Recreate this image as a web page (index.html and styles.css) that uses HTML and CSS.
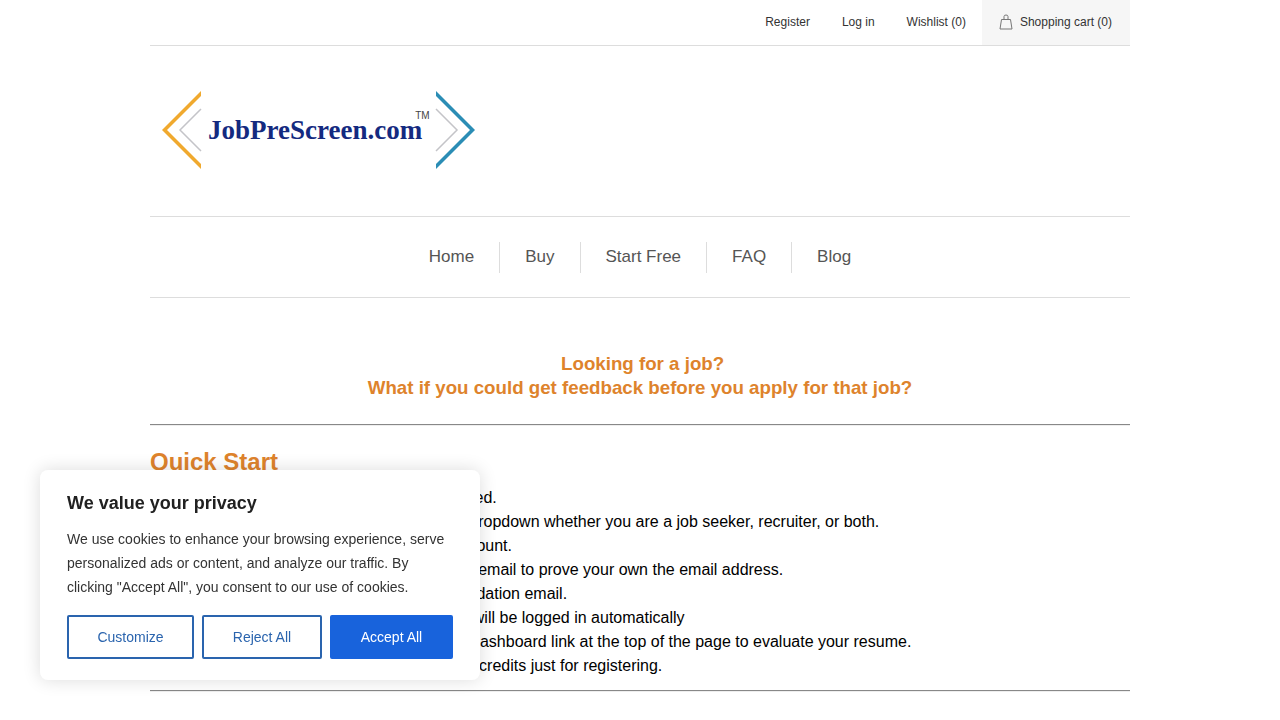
FILE: index.html
```html
<!DOCTYPE html>
<html lang="en">
<head>
    <meta charset="UTF-8">
    <meta name="viewport" content="width=device-width, initial-scale=1.0">
    <title>JobPreScreen.com</title>
    <link rel="stylesheet" href="styles.css">
</head>
<body>

    <div class="master">
        <div class="header-links">
            <a href="#">Register</a>
            <a href="#">Log in</a>
            <a href="#">Wishlist (0)</a>
            <a href="#" class="cart-link">
                <svg class="cart-icon" width="16" height="16" viewBox="0 0 16 16" fill="none" stroke="#777" stroke-width="1">
                    <path d="M2.500 5.500h9l1.500 9.500h-12z"/>
                    <path d="M5 5.500V2.500q0-1.500 2-1.500t2 1.500v3"/>
                </svg>
                Shopping cart (0)
            </a>
        </div>

        <div class="logo-row">
            <a href="#" class="logo">
                <svg class="logo-arrows" width="320" height="84" viewBox="0 0 320 84" fill="none">
                    <polygon points="42,3 42,8 8,42 42,76 42,81 3,42" fill="#f0a92e"/>
                    <path d="M42 21 L21 42 L42 63" stroke="#c4c4c8" stroke-width="1.500"/>
                    <polygon points="277,3 316,42 277,81 277,76 311,42 277,8" fill="#2b8db5"/>
                    <path d="M277 21 L298 42 L277 63" stroke="#c4c4c8" stroke-width="1.500"/>
                </svg>
                <span class="logo-text">JobPreScreen.com<sup class="logo-tm">TM</sup></span>
            </a>
        </div>

        <ul class="top-menu">
            <li><a href="#">Home</a></li>
            <li><a href="#">Buy</a></li>
            <li><a href="#">Start Free</a></li>
            <li><a href="#">FAQ</a></li>
            <li><a href="#">Blog</a></li>
        </ul>

        <div class="intro">
            <div>&nbsp;Looking for a job?</div>
            <div>What if you could get feedback before you apply for that job?</div>
        </div>
        <hr class="rule">

        <h2 class="quick-title">Quick Start</h2>
        <ol class="quick-steps">
            <li>1. Click the Start Free. No credit card is required.</li>
            <li>2. Fill out the whole form and select from the dropdown whether you are a job seeker, recruiter, or both.</li>
            <li>3. Use a real email address to create your account.</li>
            <li>4. Right after this, you will receive a validation email to prove your own the email address.</li>
            <li>5. Please click on the link provided in your validation email.</li>
            <li>6. After you click on your verification link, you will be logged in automatically</li>
            <li>7. When you are logged in, simply select the Dashboard link at the top of the page to evaluate your resume.</li>
            <li>8. You shall also receive some free evaluation credits just for registering.</li>
        </ol>
        <hr class="rule">
    </div>

    <div class="cookie-banner">
        <p class="cookie-title">We value your privacy</p>
        <p class="cookie-text">We use cookies to enhance your browsing experience, serve personalized ads or content, and analyze our traffic. By clicking "Accept All", you consent to our use of cookies.</p>
        <div class="cookie-buttons">
            <button class="cookie-btn customize">Customize</button>
            <button class="cookie-btn reject">Reject All</button>
            <button class="cookie-btn accept">Accept All</button>
        </div>
    </div>

</body>
</html>
```

FILE: styles.css
```css
body {
    margin: 0;
    font-family: "Liberation Sans", Arial, sans-serif;
    color: #000;
    background: #fff;
}

a {
    color: inherit;
    text-decoration: none;
}

.master {
    width: 980px;
    margin: 0 auto;
}

/* top links */
.header-links {
    display: flex;
    justify-content: flex-end;
    height: 45px;
    border-bottom: 1px solid #ddd;
    font-size: 12px;
    color: #333;
}

.header-links a {
    display: flex;
    align-items: center;
    padding: 0 16px 2px;
}

.header-links .cart-link {
    padding: 0 18px 2px 17px;
    background: #f6f6f6;
    gap: 5px;
}

/* logo */
.logo-row {
    display: flex;
    align-items: center;
    height: 170px;
    border-bottom: 1px solid #ddd;
}

.logo {
    position: relative;
    display: block;
    width: 320px;
    height: 84px;
    margin-left: 9px;
    margin-top: -2px;
}

.logo-arrows {
    display: block;
}

.logo-text {
    position: absolute;
    top: 26px;
    left: 49px;
    font-family: "Liberation Serif", serif;
    font-weight: bold;
    font-size: 27px;
    line-height: 32px;
    color: #142a80;
    white-space: nowrap;
}

.logo-tm {
    position: absolute;
    top: -4px;
    left: 100%;
    margin-left: -7px;
    font-family: "Liberation Sans", sans-serif;
    font-weight: normal;
    font-size: 10px;
    line-height: 12px;
    color: #444;
}

/* menu */
.top-menu {
    display: flex;
    justify-content: center;
    align-items: center;
    height: 80px;
    margin: 0;
    padding: 0;
    list-style: none;
    border-bottom: 1px solid #ddd;
    font-size: 17px;
    color: #555;
}

.top-menu li {
    padding: 0 25px;
    line-height: 31px;
    border-left: 1px solid #ddd;
}

.top-menu li a {
    position: relative;
    top: -1px;
}

.top-menu li:first-child {
    border-left: none;
}

/* content */
.intro {
    margin-top: 54px;
    text-align: center;
    font-size: 18.720px;
    font-weight: bold;
    line-height: 24px;
    color: #de832c;
}

.rule {
    margin: 24px 0 0;
    border: none;
    border-top: 1px solid #888;
    border-bottom: 1px solid #eee;
}

.quick-title {
    margin: 21px 0 0;
    font-size: 24px;
    line-height: 30px;
    color: #de832c;
}

.quick-steps {
    margin: 9px 0 0;
    padding: 0;
    list-style: none;
    font-size: 16px;
    line-height: 24px;
}

.quick-steps + .rule {
    margin-top: 12px;
}

/* cookie banner */
.cookie-banner {
    position: fixed;
    left: 40px;
    bottom: 40px;
    width: 386px;
    padding: 24px 27px 21px;
    background: #fff;
    border-radius: 8px;
    box-shadow: 0 0 18px rgba(0, 0, 0, 0.14);
}

.cookie-title {
    margin: 0 0 15px;
    font-size: 18px;
    font-weight: bold;
    line-height: 18px;
    color: #212121;
}

.cookie-text {
    margin: 0 0 16px;
    font-size: 14px;
    line-height: 24px;
    color: #333;
}

.cookie-buttons {
    display: flex;
    gap: 8px;
}

.cookie-btn {
    height: 44px;
    border: 2px solid #2a64ae;
    border-radius: 2px;
    background: #fff;
    color: #2a64ae;
    font-family: inherit;
    font-size: 14px;
    padding: 0;
}

.customize { width: 127px; }
.reject { width: 120px; }

.accept {
    width: 123px;
    background: #1863dc;
    border-color: #1863dc;
    color: #fff;
}
```
